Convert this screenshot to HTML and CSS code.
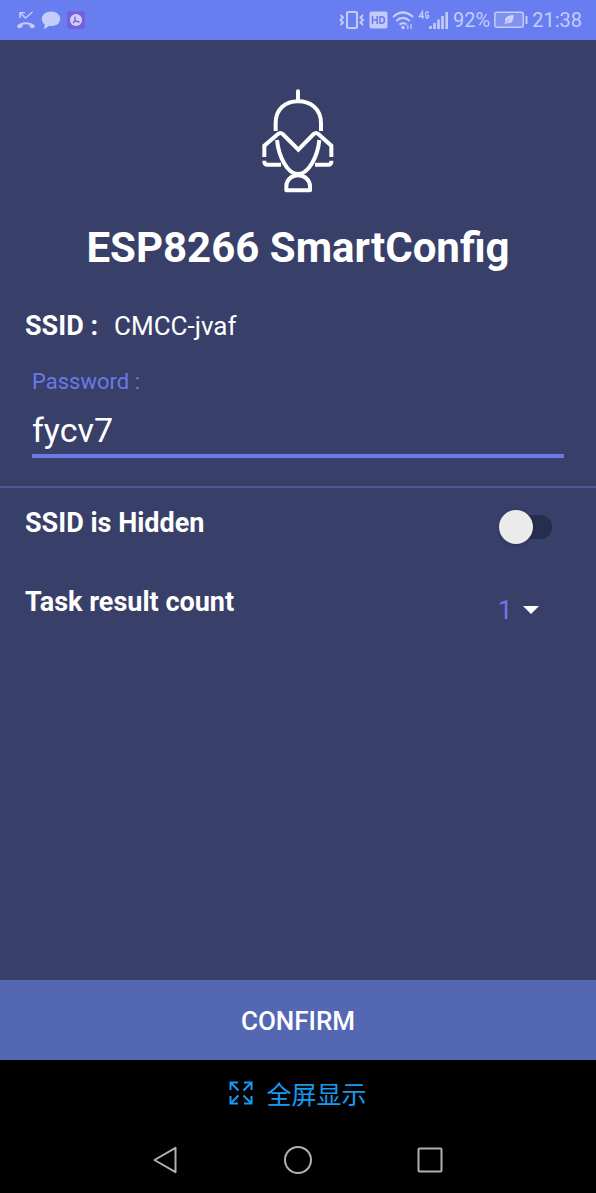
FILE: index.html
```html
<!DOCTYPE html>
<html lang="en">
<head>
<meta charset="utf-8">
<meta name="viewport" content="width=device-width, initial-scale=1">
<title>ESP8266 SmartConfig</title>
<link rel="stylesheet" href="styles.css">
</head>
<body>
<div class="screen">
  <header class="status">
    <div class="status-left">
      <svg width="20" height="20" viewBox="0 0 20 20" fill="none" stroke="currentColor" stroke-width="1.5"><path d="M4 8V2.700H9M4 2.700L9.500 8 16.500 2"/><path d="M.8 16C5 11 15 11 19.200 16L17 18.500 13.500 17V14.800Q10 13.700 6.500 14.800V17L3 18.500Z" fill="currentColor" stroke="none"/></svg>
      <svg width="20" height="20" viewBox="0 0 20 20" fill="currentColor"><path d="M10 1.500C4.800 1.500.8 4.600.8 9c0 2.300 1 4.200 3 5.500-.1 1.700-.5 3-1.300 4.300 2.200-.4 3.900-1.400 5.200-2.900 6.800.9 11.500-2.300 11.500-7C19.200 4.600 15.200 1.500 10 1.500Z"/></svg>
      <svg width="20" height="20" viewBox="0 0 20 20"><rect x="1" y="1" width="18" height="18" rx="4" fill="#7660dd"/><circle cx="10" cy="10" r="6" fill="#d3cdf9"/><path d="M9 6.500V11l4.500 1M9 11l-2 2" fill="none" stroke="#7460cf" stroke-width="1.300"/></svg>
    </div>
    <div class="status-right">
      <svg width="26" height="22" viewBox="0 0 26 22" fill="none" stroke="currentColor" stroke-width="2"><rect x="8" y="3" width="10" height="16" rx="1"/><path d="M1.500 6l2.500 2.500-2.500 2.500 2.500 2.500-2.500 2.500M24 6l-2.500 2.500 2.500 2.500-2.500 2.500 2.500 2.500"/></svg>
      <svg width="19" height="20" viewBox="0 0 19 20" fill="none"><rect x=".5" y="1.500" width="18" height="17" rx="2" fill="currentColor"/><path d="M3.500 6v8M8.200 6v8M3.500 10h4.700M11 6.800v6.400h1.800q2.600 0 2.600-3.200t-2.600-3.200Z" stroke="#6a7deb" stroke-width="1.600"/></svg>
      <svg width="22" height="20" viewBox="0 0 22 20" fill="none" stroke="currentColor" stroke-width="2.200"><path d="M1 7Q11 -2 21 7M4.300 11Q11 4.800 17.700 11M7.500 14.700Q11 11.700 14.500 14.700"/><circle cx="11" cy="17.500" r="1.700" fill="currentColor" stroke="none"/><path d="M15.800 15v4M19 14v5" stroke-width="1.300"/></svg>
      <svg width="31" height="22" viewBox="0 0 31 22" fill="none" stroke="currentColor"><path d="M4.500 10V2.500L1.300 7.500H6M10.500 4.300Q10 2.700 9 2.700 7.700 2.700 7.700 6T9 9.400q1.500 0 1.500-2.900H9" stroke-width="1.300"/><path d="M12.500 17v3M16.500 14V20M20.500 10.500v9.500M24.500 7V20M28.700 3V20" stroke-width="2.600"/></svg>
      <span>92%</span>
      <svg width="34" height="18" viewBox="0 0 34 18" fill="none"><rect x=".8" y="1.300" width="28.500" height="15" rx="2" fill="#8391ee" stroke="currentColor" stroke-width="1.500"/><path d="M32.500 5v8" stroke="currentColor" stroke-width="2"/><path d="M19.500 4C14 4.200 9.500 6.500 11.500 11L10.500 13l1.200.5 1-1.500C17.500 13.500 20 9.500 19.500 4Z" fill="#cbd3fc"/><path d="M12.500 11.500l3-3" stroke="#8391ee" stroke-width=".8"/></svg>
      <span>21:38</span>
    </div>
  </header>

  <main class="content">
    <form class="form" id="config">
      <svg class="logo" viewBox="0 0 300 360" fill="none" stroke="currentColor" stroke-width="12" role="img" aria-label="Robot">
        <path d="M150 34V63" stroke-linecap="round"/>
        <path d="M83 153V130C83 86 113 64 150 64S219 86 219 130V153"/>
        <path d="M49 231V197L90 162Q97 156 104 162L151 209 197 162Q204 156 211 162L250 197V231"/>
        <path d="M49 242V246Q50 254 58 254H99M201 254H241Q249 254 250 246V242"/>
        <path d="M87 180C92 230 118 282 150 282S209 230 214 180"/>
        <path d="M115 331V319C115 300 130 286 150 286S186 300 186 319V331Z" stroke-linejoin="round"/>
      </svg>
      <h1 class="title">ESP8266 SmartConfig</h1>
      <div class="network"><strong>SSID :</strong><span>CMCC-jvaf</span></div>
      <div class="field">
        <label for="password">Password :</label>
        <input id="password" type="text" value="fycv7" autocomplete="off">
      </div>
      <div class="options">
        <div class="option">
          <label for="hidden">SSID is Hidden</label>
          <input class="switch" id="hidden" type="checkbox" role="switch">
        </div>
        <div class="option">
          <label for="count">Task result count</label>
          <div class="picker">
            <select id="count"><option>1</option><option>2</option><option>3</option><option>4</option><option>5</option></select>
            <svg width="16" height="8" viewBox="0 0 16 8" fill="currentColor"><path d="M0 0H16L8 8Z"/></svg>
          </div>
        </div>
      </div>
    </form>
  </main>

  <button class="confirm" type="submit" form="config">CONFIRM</button>

  <footer class="system">
    <button class="fullscreen" type="button">
      <svg width="24" height="24" viewBox="0 0 24 24" fill="none" stroke="currentColor" stroke-width="2"><path d="M1.500 9V1.500H9M1.500 1.500l8 8M15 1.500h7.500V9M22.500 1.500l-8 8M1.500 15v7.500H9M1.500 22.500l8-8M15 22.500h7.500V15M22.500 22.500l-8-8"/></svg>
      <span lang="zh">全屏显示</span>
    </button>
    <nav class="nav">
      <button type="button" aria-label="Back"><svg width="28" height="28" viewBox="0 0 28 28"><path d="M2.500 14L23.500 1.800V26.200Z"/></svg></button>
      <button type="button" aria-label="Home"><svg width="28" height="28" viewBox="0 0 28 28"><circle cx="14" cy="14" r="13"/></svg></button>
      <button type="button" aria-label="Recent apps"><svg width="28" height="28" viewBox="0 0 28 28"><rect x="2.500" y="2.500" width="23" height="23" rx="1"/></svg></button>
    </nav>
  </footer>
</div>
</body>
</html>
```

FILE: styles.css
```css
* {
  box-sizing: border-box;
}

body {
  margin: 0;
  background: #000;
  color: #fff;
  font-family: Roboto, "Noto Sans CJK SC", sans-serif;
}

button,
input,
select {
  margin: 0;
  padding: 0;
  border: 0;
  border-radius: 0;
  background: none;
  color: inherit;
  font: inherit;
}

svg {
  display: block;
  flex: none;
}

.screen {
  display: flex;
  flex-direction: column;
  min-height: 100vh;
}

.status {
  display: flex;
  align-items: center;
  justify-content: space-between;
  height: 40px;
  padding: 0 14px 0 16px;
  background: #687df0;
  color: #c3ccfb;
  font-size: 20px;
}

.status-left,
.status-right {
  display: flex;
  align-items: center;
}

.status-left {
  gap: 5px;
}

.status-right {
  gap: 4px;
}

.content {
  flex: 1;
  background: #383f69;
}

.form {
  display: flex;
  flex-direction: column;
  padding-top: 40px;
}

.logo {
  align-self: center;
  width: 100px;
  height: 120px;
}

.title {
  margin: 20px 0 0;
  font-size: 42px;
  font-weight: 700;
  line-height: 56px;
  text-align: center;
}

.network {
  display: flex;
  gap: 16px;
  padding: 35px 25px 0;
  font-size: 26px;
  line-height: 30px;
}

.network strong {
  font-size: 27px;
}

.field {
  display: flex;
  flex-direction: column;
  padding: 26px 32px 28px;
  border-bottom: 2px solid #505995;
}

.field label {
  color: #6b79e8;
  font-size: 22px;
  line-height: 30px;
}

.field input {
  width: 100%;
  height: 61px;
  padding-top: 8px;
  border-bottom: 4px solid #6b79e8;
  outline: 0;
  font-size: 34px;
}

.option {
  display: flex;
  align-items: flex-start;
  justify-content: space-between;
  height: 79px;
  padding: 20px 44px 0 25px;
}

.option label {
  font-size: 27px;
  font-weight: 700;
  line-height: 30px;
}

.switch {
  display: flex;
  align-items: center;
  appearance: none;
  width: 53px;
  height: 24px;
  margin: 7px 0;
  border-radius: 12px;
  background: #272d4c;
}

.switch::before {
  content: "";
  flex: none;
  width: 34px;
  height: 34px;
  border-radius: 50%;
  background: #ebebeb;
  box-shadow: 0 1px 3px #20264780;
}

.switch:checked {
  justify-content: flex-end;
}

.picker {
  display: flex;
  align-items: center;
  width: 54px;
  height: 46px;
  font-size: 26px;
}

.picker select {
  appearance: none;
  width: 41px;
  height: 46px;
  margin-right: -16px;
  color: #6b79e8;
}

.picker svg {
  pointer-events: none;
}

.confirm {
  height: 80px;
  padding-top: 2px;
  background: #5467b3;
  font-size: 26px;
  font-weight: 500;
}

.system {
  background: #000;
}

.fullscreen {
  display: flex;
  align-items: center;
  justify-content: center;
  gap: 13px;
  width: 100%;
  height: 66px;
  color: #179af0;
  font-size: 25px;
}

.nav {
  display: flex;
  justify-content: center;
  gap: 104px;
  height: 67px;
}

.nav svg {
  fill: none;
  stroke: #b0b0b0;
  stroke-width: 2;
  stroke-linejoin: round;
}
```
